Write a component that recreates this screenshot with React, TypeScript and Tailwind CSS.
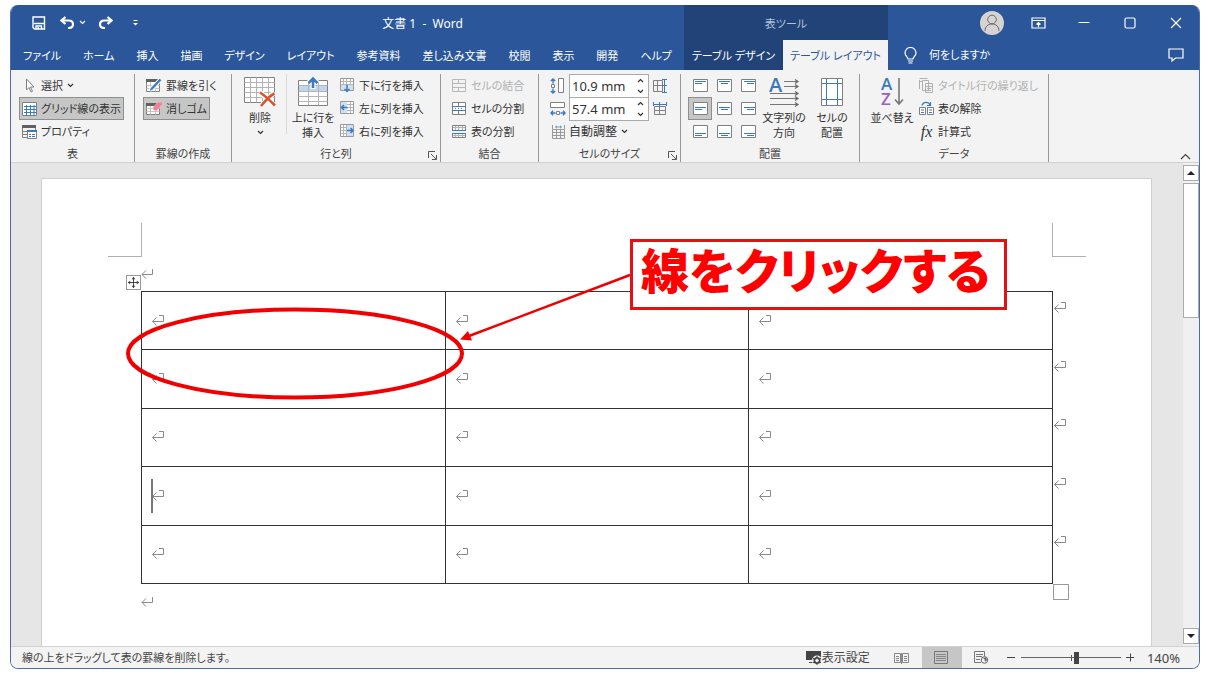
import React, { useState } from "react";

const GRAY = "#808080";
const BLUE = "#3a7abd";

interface IconProps {
  w: number;
  h: number;
  children: React.ReactNode;
}

const Icon = ({ w, h, children }: IconProps) => (
  <svg
    width={w}
    height={h}
    viewBox={`0 0 ${w} ${h}`}
    fill="none"
    className="shrink-0"
    aria-hidden="true"
  >
    {children}
  </svg>
);

const Chevron = () => (
  <Icon w={7} h={5}>
    <path d="M1 1l2.500 2.500L6 1" stroke="currentColor" strokeWidth="1.2" />
  </Icon>
);

/* ---------- title bar ---------- */

const SaveIcon = () => (
  <Icon w={14} h={14}>
    <path d="M1 1h11.500v12H2.500L1 11.500z" stroke="white" strokeWidth="1.4" />
    <path d="M2 7.500h10M4 13V10h5.500v3" stroke="white" strokeWidth="1.4" />
    <path d="M5.500 11h1.500v2H5.500z" fill="white" />
  </Icon>
);

const UndoIcon = () => (
  <Icon w={15} h={13}>
    <path d="M5.500 1L1.500 4.500l4 3.500M2 4.500h6.500c6 0 6 7.500 0 7.500H8" stroke="white" strokeWidth="2.200" />
  </Icon>
);

const RedoIcon = () => (
  <Icon w={15} h={13}>
    <path d="M9.500 1l4 3.500-4 3.500M13 4.500H6.500c-6 0-6 7.500 0 7.500H7" stroke="white" strokeWidth="2.200" />
  </Icon>
);

const CustomizeIcon = () => (
  <Icon w={5} h={6}>
    <path d="M0.500 0.500h4" stroke="white" />
    <path d="M0 3h5L2.500 5.500z" fill="white" />
  </Icon>
);

const AvatarIcon = () => (
  <Icon w={24} h={24}>
    <circle cx="12" cy="12" r="12" fill="#d6d4d2" />
    <circle cx="12" cy="8.500" r="4.300" stroke="#6b6967" />
    <path d="M5 20c0-4.500 3-7 7-7s7 2.500 7 7" stroke="#6b6967" />
  </Icon>
);

const RibbonOptionsIcon = () => (
  <Icon w={15} h={12}>
    <path d="M1 1h13v10H1zM1 3.500h13" stroke="white" strokeWidth="1.2" />
    <path d="M7.500 10V5.500M5.500 7.500l2-2 2 2" stroke="white" strokeWidth="1.2" />
  </Icon>
);

const BulbIcon = () => (
  <Icon w={13} h={17}>
    <path d="M4 12c0-2-3-3-3-6a5.500 5.500 0 0 1 11 0c0 3-3 4-3 6z" stroke="white" strokeWidth="1.2" />
    <path d="M4 14h5M4.500 16h4" stroke="white" strokeWidth="1.200" />
  </Icon>
);

const CommentIcon = () => (
  <Icon w={16} h={14}>
    <path d="M1 1h14v9H7.500L4 13v-3H1z" stroke="white" strokeWidth="1.2" />
  </Icon>
);

/* ---------- ribbon ---------- */

const CursorIcon = () => (
  <Icon w={15} h={15}>
    <path d="M4.500 1v11l2.500-2.500 2 4.500 1.500-.7-2-4.300H12z" fill="white" stroke={GRAY} />
  </Icon>
);

const GridlinesIcon = () => (
  <Icon w={15} h={14}>
    <path d="M.5 .5h14v13H.5z" fill="white" stroke={GRAY} />
    <path d="M4.500 3v10.500M8.500 3v10.500M12 3v10.500M2 4.500h12.500M2 7.500h12.500M2 10.500h12.500" stroke={BLUE} />
  </Icon>
);

const PropertiesIcon = () => (
  <Icon w={15} h={14}>
    <path d="M0 0h14v3H0z" fill="#606060" />
    <path d="M.5 3v9.500H5M.5 6.500H5M.5 9.500H5M13.500 3v2" stroke={GRAY} />
    <path d="M5.500 5.500h9v8h-9z" fill="white" stroke={GRAY} />
    <path d="M5 5h10v2H5z" fill={BLUE} />
    <path d="M7 9.500h2M10 9.500h3M7 11.500h2M10 11.500h3" stroke={BLUE} />
  </Icon>
);

const DrawTableIcon = () => (
  <Icon w={16} h={15}>
    <path d="M.5 2.500h13v11H.5z" fill="white" stroke={GRAY} />
    <path d="M0 1h14v3H0z" fill="#606060" />
    <path d="M.5 7.500h13M.5 10.500h13M4.500 4v9.500M9.500 4v9.500" stroke="#c4c4c4" />
    <path d="M4.500 12L14 2" stroke="white" strokeWidth="4" />
    <path d="M5.500 11L14.500 1.500" stroke={BLUE} strokeWidth="2.400" />
    <path d="M4 12.500l.7-2.500 1.800 1.700z" fill={BLUE} />
  </Icon>
);

const EraserIcon = () => (
  <Icon w={16} h={14}>
    <path d="M.5 2.500h13v10H.5z" fill="white" stroke={GRAY} />
    <path d="M0 1h14v3H0z" fill="#606060" />
    <path d="M.5 6.500h13M.5 9.500h13M4.500 4v8.500M9.500 4v8.500" stroke="#c4c4c4" />
    <path d="M7 5.500L12 0h4v2.500l-5 6H8z" fill="#ee7f98" stroke="#f7c3cd" strokeWidth=".6" />
  </Icon>
);

const DeleteIcon = () => (
  <Icon w={32} h={30}>
    <path d="M.5 .5h30v25H.5z" fill="white" stroke={GRAY} />
    <path d="M6.500 .5v25M12.500 .5v25M18.500 .5v25M24.500 .5v25M.5 5.500h30M.5 10.500h30M.5 15.500h30M.5 20.500h30" stroke="#b4b4b4" />
    <path d="M16 15l15 14M30.500 15.500L17 29" stroke="white" strokeWidth="5" />
    <path d="M16 15.500c5 3 10 8 15 13M30.500 16.500C25 19 21 24 17 29" stroke="#d9532c" strokeWidth="2.600" />
  </Icon>
);

const InsertAboveIcon = () => (
  <Icon w={31} h={30}>
    <path d="M.5 3.500h29v25H.5z" fill="white" stroke={GRAY} />
    <path d="M1 8.500h28v6H1z" fill="#bdd7ee" />
    <path d="M10.500 3.500v25M20.500 3.500v25M.5 8.500h29M.5 14.500h29M.5 19.500h29M.5 24.500h29" stroke="#b4b4b4" />
    <path d="M15 12V2M10.500 6L15 1.500 19.500 6" stroke="white" strokeWidth="5" />
    <path d="M15 11V2M10.500 6.200L15 1.500l4.500 4.700" stroke={BLUE} strokeWidth="2.600" />
  </Icon>
);

interface InsertIconProps {
  side: "below" | "left" | "right";
}

const InsertIcon = ({ side }: InsertIconProps) => (
  <Icon w={15} h={15}>
    <path d="M.5 .5h13v12H.5z" fill="white" />
    <path d="M3.500 .5v12M6.500 .5v12M10.500 .5v12M.5 3.500h13M.5 6.500h13M.5 9.500h13" stroke="#b4b4b4" />
    <path d="M.5 .5h13v12H.5z" stroke="#999" />
    {side === "below" && (
      <>
        <path d="M1 7h12v5H1z" fill="#cfe0f2" />
        <path d="M7 7v6.500M4.500 11L7 13.500 9.500 11" stroke={BLUE} strokeWidth="1.500" />
      </>
    )}
    {side === "left" && (
      <>
        <path d="M1 1h6v11H1z" fill="#cfe0f2" />
        <path d="M7.500 6.500H1.500M4 4L1.500 6.500 4 9" stroke={BLUE} strokeWidth="1.500" />
      </>
    )}
    {side === "right" && (
      <>
        <path d="M7 1h6v11H7z" fill="#cfe0f2" />
        <path d="M7 6.500h6M10.500 4L13 6.500 10.500 9" stroke={BLUE} strokeWidth="1.500" />
      </>
    )}
  </Icon>
);

const MergeIcon = () => (
  <Icon w={15} h={14}>
    <path d="M.5 .5h13v12H.5zM.5 4.500h13M.5 8.500h13M6.500 .5v4M6.500 8.500v4" stroke="#b8b8b8" />
  </Icon>
);

const SplitCellIcon = () => (
  <Icon w={15} h={14}>
    <path d="M.5 .5h13v12H.5zM6.500 .5v4M6.500 8.500v4" fill="white" stroke={GRAY} />
    <path d="M0 4.500h14M0 8.500h14M3 6.500h1M6 6.500h1M9 6.500h1" stroke={BLUE} />
  </Icon>
);

const SplitTableIcon = () => (
  <Icon w={15} h={14}>
    <path d="M3.500 .5v5M6.500 .5v5M10.500 .5v5M3.500 8.500v4M6.500 8.500v4M10.500 8.500v4M.5 2.500h13M.5 10.500h13" stroke="#b4b4b4" />
    <path d="M.5 .5h13v5H.5zM.5 8.500h13v4H.5z" stroke={GRAY} />
    <path d="M0 5.500h14M0 8.500h14" stroke={BLUE} />
  </Icon>
);

const HeightIcon = () => (
  <Icon w={16} h={16}>
    <path d="M8.500 .5h5v14h-5z" fill="white" stroke={GRAY} />
    <path d="M1.500 6.500h3v3h-3z" fill="white" stroke={GRAY} />
    <path d="M3 5.500V1M.8 3L3 1l2.200 2M3 10.500V15M.8 13L3 15l2.200-2" stroke={BLUE} strokeWidth="1.400" />
  </Icon>
);

const WidthIcon = () => (
  <Icon w={16} h={16}>
    <path d="M.5 1.500h14v5H.5z" fill="white" stroke={GRAY} />
    <path d="M6.500 10.500h3v3h-3z" fill="white" stroke={GRAY} />
    <path d="M5.500 12H1M3 9.800L1 12l2 2.200M10.500 12H15M13 9.800L15 12l-2 2.200" stroke={BLUE} strokeWidth="1.400" />
  </Icon>
);

const AutoFitIcon = () => (
  <Icon w={13} h={14}>
    <path d="M.5 4.500h12v9H.5zM.5 7.500h12M.5 10.500h12M4.500 4.500v9M8.500 4.500v9" stroke="#999" />
    <path d="M.5 0v4M12.500 0v4M4 2h5" stroke="#999" />
    <path d="M5 .8L3.500 2 5 3.200M8 .8L9.500 2 8 3.200" stroke={BLUE} strokeWidth=".8" />
  </Icon>
);

const DistributeRowsIcon = () => (
  <Icon w={15} h={14}>
    <path d="M.5 1.500h9v11h-9zM.5 6.500h9M4.500 1.500v11" stroke={GRAY} />
    <path d="M9 .5h5M9 6.500h5M9 13.500h5M11.500 1v12" stroke={BLUE} />
  </Icon>
);

const DistributeColumnsIcon = () => (
  <Icon w={14} h={14}>
    <path d="M1.500 4.500h11v8h-11zM1.500 8.500h11M6.500 4.500v8" stroke={GRAY} />
    <path d="M.5 0v4M6.500 0v4M13.500 0v4M1 2.500h12" stroke={BLUE} />
  </Icon>
);

interface AlignIconProps {
  row: number;
  col: number;
}

const AlignIcon = ({ row, col }: AlignIconProps) => {
  const y = [2.5, 5.5, 8.5][row];
  const longX = [2, 2, 3][col];
  const shortX = [2, 4, 6][col];
  return (
    <Icon w={15} h={13}>
      <path d="M.5 .5h14v12H.5z" fill="white" stroke={GRAY} />
      <path d={`M${longX} ${y}h11M${shortX} ${y + 2}h7`} stroke={BLUE} />
    </Icon>
  );
};

const TextDirectionIcon = () => (
  <Icon w={31} h={30}>
    <text x="0" y="15" fontSize="20" fontWeight="600" fontFamily="Open Sans, Noto Sans, sans-serif" fill={BLUE}>
      A
    </text>
    <path d="M15 4.500h13M15 9.500h13M1 16.500h27M1 21.500h27M1 27.500h27" stroke="#777" />
    <path d="M26 2.500l3 2-3 2M26 7.500l3 2-3 2M26 14.500l3 2-3 2M26 19.500l3 2-3 2M26 25.500l3 2-3 2" stroke="#666" strokeWidth="1.200" />
  </Icon>
);

const CellMarginsIcon = () => (
  <Icon w={22} h={28}>
    <path d="M.5 .5h21v27H.5z" fill="white" stroke={GRAY} />
    <path d="M5.500 1v26M16.500 1v26M1 5.500h20M1 21.500h20" stroke={BLUE} />
  </Icon>
);

const SortIcon = () => (
  <Icon w={24} h={30}>
    <g fontSize="17" fontWeight="600" fontFamily="Open Sans, Noto Sans, sans-serif">
      <text x="1" y="13" fill={BLUE}>
        A
      </text>
      <text x="1" y="28" fill="#9b5fc0">
        Z
      </text>
    </g>
    <path d="M19 1v26M15 22.500l4 4.500 4-4.500" stroke="#777" strokeWidth="1.600" />
  </Icon>
);

const RepeatHeaderIcon = () => (
  <Icon w={15} h={15}>
    <path d="M.5 .5h8M.5 2v9M3.500 2.500h6v10h-6zM6.500 5.500h7v9h-7z" fill="#f3f3f3" stroke="#b0b0b0" />
    <path d="M7 8.500h6M8 10.500h4M8 12.500h4M1 3.500h2" stroke="#b0b0b0" />
  </Icon>
);

const ConvertIcon = () => (
  <Icon w={15} h={15}>
    <path d="M.5 6.500h6v7h-6zM8.500 6.500h6v7h-6z" fill="white" stroke={GRAY} />
    <path d="M2 9h3M2 11.500h3M10 9h3M10 11.500h3" stroke={BLUE} />
    <path d="M3 4.500c1-4 6.500-4 8-.5M11.500 1v3.500H8" stroke={BLUE} strokeWidth="1.200" />
  </Icon>
);

const LauncherIcon = () => (
  <Icon w={9} h={9}>
    <path d="M.5 7V.5H7M3 3l5 5M8.500 4v4.500H4" stroke="#555" />
  </Icon>
);

/* ---------- document marks ---------- */

// mark that ends a table cell
const CellMark = () => (
  <Icon w={13} h={12}>
    <path d="M8 .5h4.500v6H1.500M5.500 2.500l-4 4 4 4" stroke="#8a8a8a" />
  </Icon>
);

// mark that ends a paragraph
const ParagraphMark = () => (
  <Icon w={13} h={12}>
    <path d="M11.500 1v5.500H1M5 2.500l-4 4 4 4" stroke="#8a8a8a" />
  </Icon>
);

/* ---------- layout pieces ---------- */

const tabs = [
  "ファイル",
  "ホーム",
  "挿入",
  "描画",
  "デザイン",
  "レイアウト",
  "参考資料",
  "差し込み文書",
  "校閲",
  "表示",
  "開発",
  "ヘルプ",
];

interface GroupProps {
  label: string;
  className: string;
  launcher?: boolean;
  children: React.ReactNode;
}

const Group = ({ label, className, launcher, children }: GroupProps) => (
  <section className={`flex shrink-0 flex-col border-r border-[#999] ${className}`}>
    <div className="flex h-[72px]">{children}</div>
    <div className="relative flex h-4 items-end justify-center leading-4 text-[#444]">
      {label}
      {launcher && (
        <button type="button" aria-label={`${label}の設定`} className="absolute right-[3px] bottom-[2px]">
          <LauncherIcon />
        </button>
      )}
    </div>
  </section>
);

interface SmallButtonProps {
  icon: React.ReactNode;
  label: string;
  active?: boolean;
  disabled?: boolean;
  arrow?: boolean;
}

const SmallButton = ({ icon, label, active, disabled, arrow }: SmallButtonProps) => (
  <button
    type="button"
    disabled={disabled}
    className={`flex h-[23px] items-center gap-1 border px-[2px] ${
      active ? "border-[#8f8f8f] bg-[#c6c6c6]" : "border-transparent"
    } ${disabled ? "text-[#b1b1b1]" : ""}`}
  >
    {icon}
    <span>{label}</span>
    {arrow && <Chevron />}
  </button>
);

interface LargeButtonProps {
  icon: React.ReactNode;
  lines: string[];
  arrow?: boolean;
}

const LargeButton = ({ icon, lines, arrow }: LargeButtonProps) => (
  <button type="button" className="flex w-12 shrink-0 flex-col items-center">
    <span className="flex h-9 items-center">{icon}</span>
    {lines.map((line) => (
      <span key={line} className="leading-[15px]">
        {line}
      </span>
    ))}
    {arrow && (
      <span className="flex h-[15px] items-center">
        <Chevron />
      </span>
    )}
  </button>
);

interface SizeFieldProps {
  id: string;
  label: string;
  icon: React.ReactNode;
  value: string;
  onChange: (value: string) => void;
}

const SizeField = ({ id, label, icon, value, onChange }: SizeFieldProps) => (
  <div className="flex h-[23px] items-center">
    <label htmlFor={id} aria-label={label} className="w-[19px]">
      {icon}
    </label>
    <div className="flex h-6 w-20 border border-[#ababab] bg-white">
      <input
        id={id}
        value={value}
        onChange={(e) => onChange(e.target.value)}
        className="w-0 flex-1 pl-[2px] text-[13px] outline-none"
      />
      <div className="flex w-4 flex-col items-center justify-center gap-[6px]">
        <button type="button" aria-label={`${label}を増やす`} className="rotate-180">
          <Chevron />
        </button>
        <button type="button" aria-label={`${label}を減らす`}>
          <Chevron />
        </button>
      </div>
    </div>
  </div>
);

const Header = () => (
  <header className="flex bg-[#2b579a] text-white">
    <div className="flex w-[673px] shrink-0 flex-col">
      <div className="flex h-[35px] items-center">
        <div className="flex w-[162px] items-center pl-[21px]">
          <button type="button" aria-label="上書き保存">
            <SaveIcon />
          </button>
          <button type="button" aria-label="元に戻す" className="ml-[14px] flex items-center gap-1">
            <UndoIcon />
            <Chevron />
          </button>
          <button type="button" aria-label="やり直し" className="ml-3">
            <RedoIcon />
          </button>
          <button type="button" aria-label="ツールバーのカスタマイズ" className="ml-5">
            <CustomizeIcon />
          </button>
        </div>
        <h1 className="flex-1 pt-[2px] pr-3 text-center text-[12px] whitespace-pre">文書 1  -  Word</h1>
      </div>
      <nav className="flex h-[30px] items-center justify-between px-3 pt-[2px]">
        {tabs.map((tab) => (
          <button type="button" key={tab}>
            {tab}
          </button>
        ))}
      </nav>
    </div>
    <div className="flex w-[204px] shrink-0 flex-col bg-[#224378]">
      <div className="flex h-[35px] items-center justify-center pt-[2px] text-[#b4c3da]">表ツール</div>
      <div className="flex h-[30px]">
        <button type="button" className="flex-1 pt-[2px]">
          テーブル デザイン
        </button>
        <button type="button" className="w-[105px] bg-[#f3f3f3] pt-[2px] text-[#2b579a]">
          テーブル レイアウト
        </button>
      </div>
    </div>
    <div className="flex flex-1 flex-col">
      <div className="flex h-[35px] items-center justify-end">
        <button type="button" aria-label="アカウント" className="flex w-[46px] justify-center">
          <AvatarIcon />
        </button>
        <button type="button" aria-label="リボンの表示オプション" className="flex w-[46px] justify-center">
          <RibbonOptionsIcon />
        </button>
        <button type="button" aria-label="最小化" className="flex w-[46px] justify-center">
          <Icon w={12} h={12}>
            <path d="M.5 5.500h11" stroke="white" />
          </Icon>
        </button>
        <button type="button" aria-label="最大化" className="flex w-[46px] justify-center">
          <Icon w={12} h={12}>
            <rect x="1" y="1" width="10" height="10" rx="1.500" stroke="white" strokeWidth="1.200" />
          </Icon>
        </button>
        <button type="button" aria-label="閉じる" className="flex w-[46px] justify-center">
          <Icon w={12} h={12}>
            <path d="M1 1l10 10M11 1L1 11" stroke="white" strokeWidth="1.200" />
          </Icon>
        </button>
      </div>
      <div className="flex h-[30px] items-center justify-between pr-[15px] pl-4">
        <button type="button" className="flex items-center gap-3">
          <BulbIcon />
          何をしますか
        </button>
        <button type="button" aria-label="コメント">
          <CommentIcon />
        </button>
      </div>
    </div>
  </header>
);

const Ribbon = () => {
  const [height, setHeight] = useState("10.9 mm");
  const [width, setWidth] = useState("57.4 mm");
  const [align, setAlign] = useState(3);

  return (
    <div className="flex border-b border-[#d2d2d2] bg-[#f3f3f3] pt-1">
      <Group label="表" className="w-[124px]">
        <div className="flex flex-col items-start pl-2">
          <SmallButton icon={<CursorIcon />} label="選択" arrow />
          <SmallButton icon={<GridlinesIcon />} label="グリッド線の表示" active />
          <SmallButton icon={<PropertiesIcon />} label="プロパティ" />
        </div>
      </Group>
      <Group label="罫線の作成" className="w-[97px]">
        <div className="flex flex-col items-start pl-2">
          <SmallButton icon={<DrawTableIcon />} label="罫線を引く" />
          <SmallButton icon={<EraserIcon />} label="消しゴム" active />
        </div>
      </Group>
      <Group label="行と列" className="w-[209px]" launcher>
        <div className="flex pl-1">
          <LargeButton icon={<DeleteIcon />} lines={["削除"]} arrow />
          <div className="mx-[2px] h-[60px] w-px bg-[#d8d8d8]" />
          <LargeButton icon={<InsertAboveIcon />} lines={["上に行を", "挿入"]} />
        </div>
        <div className="flex flex-col">
          <SmallButton icon={<InsertIcon side="below" />} label="下に行を挿入" />
          <SmallButton icon={<InsertIcon side="left" />} label="左に列を挿入" />
          <SmallButton icon={<InsertIcon side="right" />} label="右に列を挿入" />
        </div>
      </Group>
      <Group label="結合" className="w-[98px]">
        <div className="flex flex-col pl-2">
          <SmallButton icon={<MergeIcon />} label="セルの結合" disabled />
          <SmallButton icon={<SplitCellIcon />} label="セルの分割" />
          <SmallButton icon={<SplitTableIcon />} label="表の分割" />
        </div>
      </Group>
      <Group label="セルのサイズ" className="w-[142px]" launcher>
        <div className="flex flex-col pl-[11px]">
          <SizeField id="cell-height" label="高さ" icon={<HeightIcon />} value={height} onChange={setHeight} />
          <SizeField id="cell-width" label="幅" icon={<WidthIcon />} value={width} onChange={setWidth} />
          <button type="button" className="flex h-[23px] items-center gap-1 pl-[2px] text-[12px]">
            <AutoFitIcon />
            自動調整
            <Chevron />
          </button>
        </div>
        <div className="flex flex-col pl-1">
          <button type="button" aria-label="高さを揃える" className="flex h-[23px] items-center">
            <DistributeRowsIcon />
          </button>
          <button type="button" aria-label="幅を揃える" className="flex h-[23px] items-center">
            <DistributeColumnsIcon />
          </button>
        </div>
      </Group>
      <Group label="配置" className="w-[179px]">
        <div className="grid h-[69px] grid-cols-[24px_24px_24px] grid-rows-3 pl-[7px]">
          {[0, 1, 2, 3, 4, 5, 6, 7, 8].map((i) => (
            <button
              type="button"
              key={i}
              aria-label={`配置 ${i + 1}`}
              onClick={() => setAlign(i)}
              className={`flex items-center justify-center border ${
                align === i ? "border-[#8f8f8f] bg-[#c6c6c6]" : "border-transparent"
              }`}
            >
              <AlignIcon row={Math.floor(i / 3)} col={i % 3} />
            </button>
          ))}
        </div>
        <LargeButton icon={<TextDirectionIcon />} lines={["文字列の", "方向"]} />
        <LargeButton icon={<CellMarginsIcon />} lines={["セルの", "配置"]} />
      </Group>
      <Group label="データ" className="w-[189px]">
        <div className="flex pl-2">
          <LargeButton icon={<SortIcon />} lines={["並べ替え"]} />
        </div>
        <div className="flex flex-col">
          <SmallButton icon={<RepeatHeaderIcon />} label="タイトル行の繰り返し" disabled />
          <SmallButton icon={<ConvertIcon />} label="表の解除" />
          <SmallButton
            icon={<span className="w-[15px] font-['Liberation_Serif',serif] text-base leading-4 italic">fx</span>}
            label="計算式"
          />
        </div>
      </Group>
      <div className="flex flex-1 items-end justify-end pr-2 pb-[2px]">
        <button type="button" aria-label="リボンを折りたたむ">
          <Icon w={11} h={7}>
            <path d="M1 6l4.500-4.500L10 6" stroke="#444" strokeWidth="1.200" />
          </Icon>
        </button>
      </div>
    </div>
  );
};

const DocumentTable = () => (
  <div className="relative flex">
    <table className="h-[293px] w-full table-fixed border-collapse">
      <tbody>
        {[0, 1, 2, 3, 4].map((row) => (
          <tr key={row}>
            {[0, 1, 2].map((col) => (
              <td key={col} className="relative border border-[#333] p-0 pl-[9px]">
                {row === 3 && col === 0 && (
                  <span className="absolute top-3 left-[9px] h-[34px] w-[2px] bg-[#777]" />
                )}
                <CellMark />
              </td>
            ))}
          </tr>
        ))}
      </tbody>
    </table>
    {/* end-of-row marks hang outside the right edge */}
    <div className="flex w-0 flex-col">
      {[0, 1, 2, 3, 4].map((row) => (
        <div key={row} className="flex-1 pt-[11px]">
          <CellMark />
        </div>
      ))}
    </div>
    <div className="absolute -top-4 -left-[15px] flex h-[15px] w-[15px] items-center justify-center border border-[#999] bg-white">
      <Icon w={11} h={11}>
        <path d="M5.500 0v11M0 5.500h11" stroke="#444" />
        <path d="M5.500 0l2 2.200h-4zM5.500 11l2-2.200h-4zM0 5.500l2.200-2v4zM11 5.500l-2.200-2v4z" fill="#444" />
      </Icon>
    </div>
    <div className="absolute top-full left-full h-4 w-4 border border-[#999] bg-white" />
  </div>
);

// red ring and arrow drawn over the sheet
const Annotation = () => (
  <>
    <svg
      width="520"
      height="170"
      viewBox="0 0 520 170"
      fill="none"
      className="absolute top-[75px] left-[79px]"
      aria-hidden="true"
    >
      <ellipse cx="174" cy="99.500" rx="167" ry="44" stroke="#f00000" strokeWidth="4" />
      <path d="M509 21L348 82" stroke="#f00000" strokeWidth="2.500" />
      <path d="M339 85.500l8-8.500 4 9.500z" fill="#f00000" />
    </svg>
    <div className="absolute top-[60px] left-[588px] flex h-[71px] w-[377px] items-center border-[3px] border-[#e60f14] bg-white pl-2 text-5xl leading-none font-black whitespace-nowrap text-[#ff0000]">
      <span className="pb-2">線をクリックする</span>
    </div>
  </>
);

const DocumentArea = () => (
  <main className="flex flex-1 bg-[#e6e6e6]">
    <div className="relative mt-[15px] mr-[31px] ml-[30px] flex-1 border border-b-0 border-[#d0d0d0] bg-white pt-11 pr-[98px] pl-[99px]">
      <div className="-mx-[33px] flex justify-between">
        <div className="h-[34px] w-[34px] border-r border-b border-[#b0b0b0]" />
        <div className="h-[34px] w-[34px] border-b border-l border-[#b0b0b0]" />
      </div>
      <div className="flex h-[34px] items-center">
        <ParagraphMark />
      </div>
      <DocumentTable />
      <div className="flex h-9 items-center">
        <ParagraphMark />
      </div>
      <Annotation />
    </div>
    <div className="flex w-4 flex-col items-stretch bg-[#f0f0f0] pt-[2px] pb-[2px]">
      <button
        type="button"
        aria-label="上へスクロール"
        className="flex h-4 items-center justify-center border border-[#ababab] bg-white"
      >
        <Icon w={8} h={4}>
          <path d="M0 4l4-4 4 4z" fill="#222" />
        </Icon>
      </button>
      <div className="mt-[2px] h-[135px] border border-[#ababab] bg-white" />
      <button
        type="button"
        aria-label="下へスクロール"
        className="mt-auto flex h-4 items-center justify-center border border-[#ababab] bg-white"
      >
        <Icon w={8} h={4}>
          <path d="M0 0h8L4 4z" fill="#222" />
        </Icon>
      </button>
    </div>
  </main>
);

const StatusBar = () => {
  const [zoom, setZoom] = useState(56);

  return (
    <footer className="flex h-[22px] items-center border-t border-[#d2d2d2] bg-[#f3f3f3] pr-[19px] pl-[11px] text-[#444]">
      <span className="flex-1">線の上をドラッグして表の罫線を削除します。</span>
      <button type="button" className="flex items-center text-[12px]">
        <Icon w={16} h={15}>
          <path d="M0 1h15v9H0zM3 12h4v1H3z" fill="#444" />
          <circle cx="11" cy="10.500" r="5" fill="#f3f3f3" />
          <circle cx="11" cy="10.500" r="2.800" stroke="#444" strokeWidth="1.500" />
          <path d="M11 6v9M7 8.300l8 4.500M7 12.800l8-4.500" stroke="#444" />
          <circle cx="11" cy="10.500" r="1.500" fill="#f3f3f3" />
        </Icon>
        表示設定
      </button>
      <button type="button" aria-label="閲覧モード" className="ml-3 flex h-[21px] w-10 items-center justify-center">
        <Icon w={15} h={12}>
          <path d="M.5 1.500h6v9h-6zM8.500 1.500h6v9h-6zM7.500 1v11" stroke="#888" />
          <path d="M2 4.500h3M2 6.500h3M2 8.500h3M10 4.500h3M10 6.500h3M10 8.500h3" stroke="#888" />
        </Icon>
      </button>
      <button
        type="button"
        aria-label="印刷レイアウト"
        className="flex h-[21px] w-10 items-center justify-center bg-[#c6c6c6]"
      >
        <Icon w={15} h={13}>
          <path d="M.5 .5h13v12H.5z" stroke="#777" />
          <path d="M2 3.500h10M2 5.500h10M2 7.500h10M2 9.500h10" stroke="#888" />
        </Icon>
      </button>
      <button type="button" aria-label="Web レイアウト" className="flex h-[21px] w-10 items-center justify-center">
        <Icon w={15} h={13}>
          <path d="M7 11.500H.5V.5h10v5" stroke="#777" />
          <path d="M2 3.500h7M2 5.500h6M2 8.500h4" stroke="#777" />
          <circle cx="10.500" cy="9" r="3.300" fill="#f3f3f3" stroke="#666" />
          <path d="M8.500 7l2 1 .5 3 2-2-1-2.500z" fill="#666" />
        </Icon>
      </button>
      <button type="button" aria-label="縮小" className="ml-[5px]">
        <Icon w={9} h={9}>
          <path d="M0 4.500h8" stroke="#444" />
        </Icon>
      </button>
      <div className="relative mx-[5px] flex h-3 w-[100px] items-center">
        <span className="absolute left-1/2 h-[6px] w-px bg-[#555]" />
        <input
          type="range"
          aria-label="ズーム"
          value={zoom}
          onChange={(e) => setZoom(Number(e.target.value))}
          className="relative h-px w-full appearance-none bg-[#666] [&::-webkit-slider-thumb]:h-3 [&::-webkit-slider-thumb]:w-[5px] [&::-webkit-slider-thumb]:appearance-none [&::-webkit-slider-thumb]:bg-[#444]"
        />
      </div>
      <button type="button" aria-label="拡大" className="mr-3">
        <Icon w={9} h={9}>
          <path d="M0 4.500h8M4.500 .5v8" stroke="#444" />
        </Icon>
      </button>
      <span className="text-[13px]">140%</span>
    </footer>
  );
};

const App = () => {
  return (
    <div
      lang="ja"
      className="flex min-h-screen bg-white pt-[5px] pr-[9px] pb-[7px] pl-[10px] font-['Noto_Sans','Noto_Sans_CJK_JP',sans-serif] text-[11px] leading-4 whitespace-nowrap text-[#333] [font-feature-settings:'palt']"
    >
      <div className="flex flex-1 flex-col overflow-hidden rounded-lg border border-t-0 border-[#4a6da7]">
        <Header />
        <Ribbon />
        <DocumentArea />
        <StatusBar />
      </div>
    </div>
  );
};

export default App;
